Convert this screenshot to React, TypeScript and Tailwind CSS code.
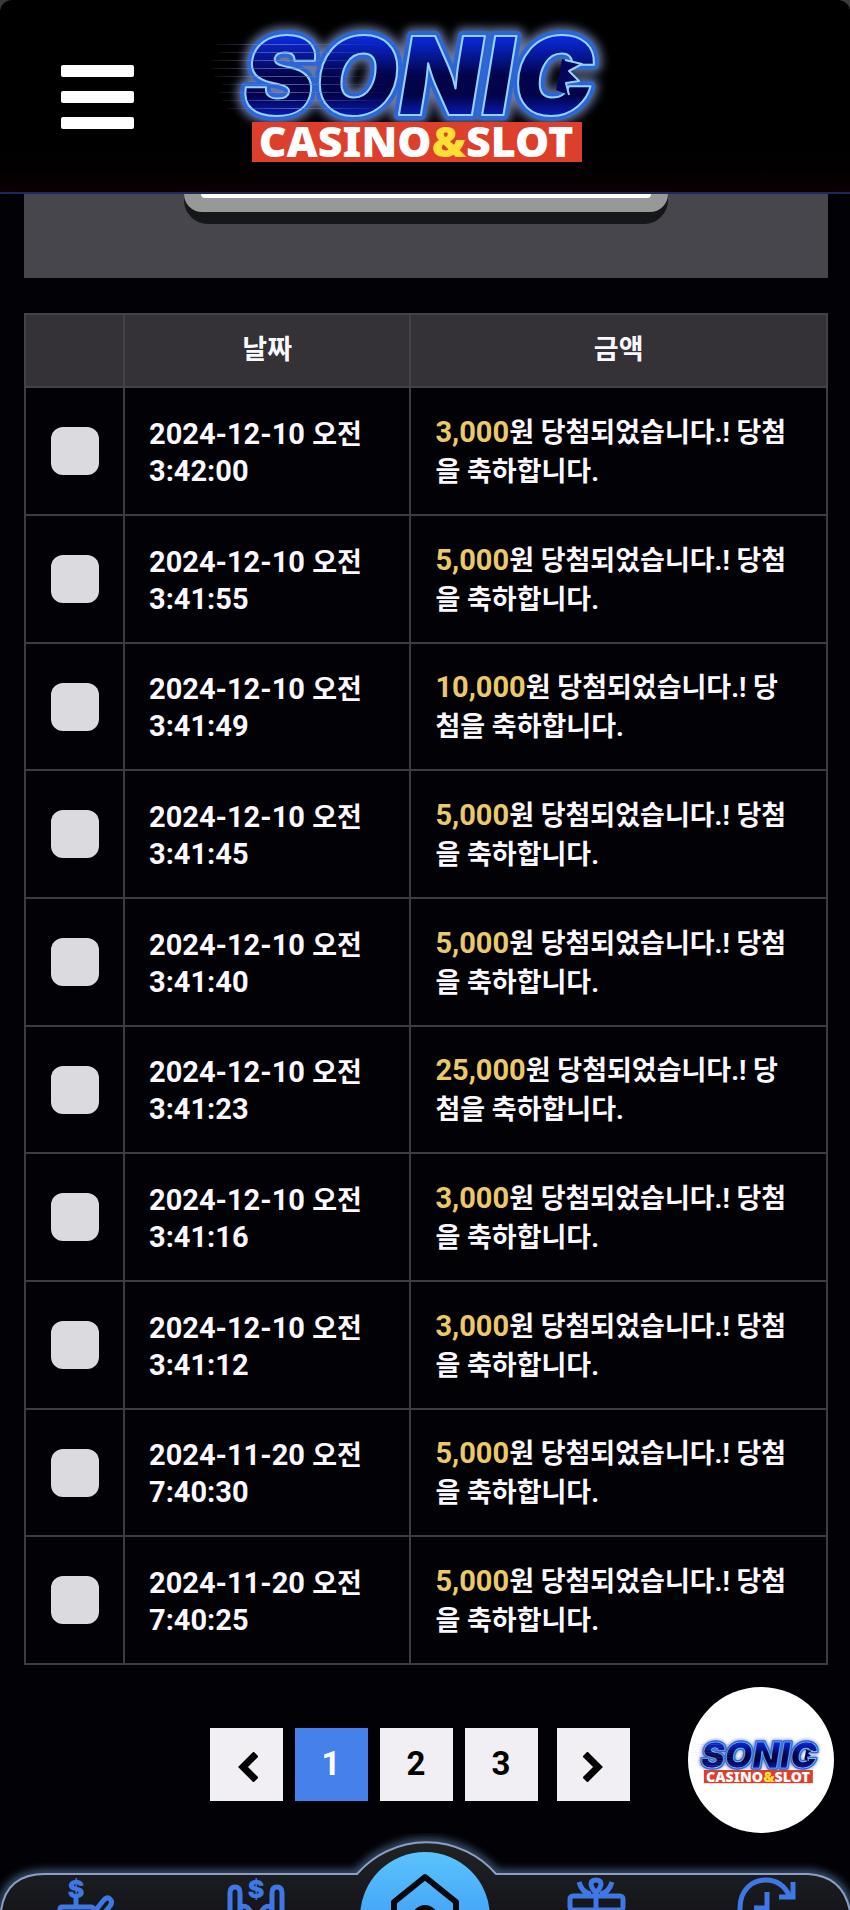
import { useState } from "react";
import { clsx } from "clsx";

interface Win {
    id: number;
    date: string;
    time: string;
    amount: string;
}

const wins: Win[] = [
    { id: 1, date: "2024-12-10", time: "3:42:00", amount: "3,000" },
    { id: 2, date: "2024-12-10", time: "3:41:55", amount: "5,000" },
    { id: 3, date: "2024-12-10", time: "3:41:49", amount: "10,000" },
    { id: 4, date: "2024-12-10", time: "3:41:45", amount: "5,000" },
    { id: 5, date: "2024-12-10", time: "3:41:40", amount: "5,000" },
    { id: 6, date: "2024-12-10", time: "3:41:23", amount: "25,000" },
    { id: 7, date: "2024-12-10", time: "3:41:16", amount: "3,000" },
    { id: 8, date: "2024-12-10", time: "3:41:12", amount: "3,000" },
    { id: 9, date: "2024-11-20", time: "7:40:30", amount: "5,000" },
    { id: 10, date: "2024-11-20", time: "7:40:25", amount: "5,000" },
];

const speedLines = [
    [216, 44], [218, 52], [212, 60], [211, 68], [214, 76], [222, 84], [219, 92], [222, 100], [226, 108],
];

function Logo({ id, className }: { id: string; className?: string }) {
    const word = "font-['Inter'] text-[108px] font-black italic";
    return (
        <svg viewBox="210 10 430 165" className={clsx("overflow-visible", className)} role="img" aria-label="SONIC CASINO&SLOT">
            <defs>
                <linearGradient id={`${id}-fill`} x1="0" y1="0" x2="0" y2="1">
                    <stop offset="0.2" stopColor="#0a2be0" />
                    <stop offset="0.5" stopColor="#02034a" />
                    <stop offset="0.65" stopColor="#02034a" />
                    <stop offset="0.85" stopColor="#0a22cc" />
                </linearGradient>
                <linearGradient id={`${id}-line`} x1="0" y1="0" x2="1" y2="0">
                    <stop offset="0" stopColor="#7d80c8" stopOpacity="0.1" />
                    <stop offset="0.4" stopColor="#7d80c8" stopOpacity="0.7" />
                    <stop offset="1" stopColor="#4a5ae0" stopOpacity="0" />
                </linearGradient>
                <filter id={`${id}-glow`} x="-20%" y="-30%" width="140%" height="160%">
                    <feGaussianBlur stdDeviation="5" />
                </filter>
            </defs>
            <text x="243" y="115" className={word} fill="#8496c8" stroke="#8496c8" strokeWidth="16" strokeLinejoin="round" opacity="0.8" filter={`url(#${id}-glow)`}>SONIC</text>
            <text x="243" y="115" className={word} fill="#2c66d6" stroke="#2c66d6" strokeWidth="10" strokeLinejoin="round" aria-hidden="true">SONIC</text>
            <text x="243" y="115" className={word} fill={`url(#${id}-fill)`} stroke="#93d4ff" strokeWidth="2" strokeLinejoin="round" aria-hidden="true">SONIC</text>
            {/* C 안쪽의 가시 */}
            <path d="M562 59L582 64L569 71L579 81L566 83L569 95L556 90Z" fill="#03065c" />
            <path d="M565 60L582 64L569 71L579 81L566 83L569 95" fill="none" stroke="#93d4ff" strokeWidth="2" strokeLinejoin="round" />
            {speedLines.map(([x, y]) => (
                <rect key={y} x={x} y={y} width="170" height="1" fill={`url(#${id}-line)`} />
            ))}
            <rect x="252" y="122" width="330" height="40" fill="#dc3f2b" />
            <text x="416" y="157" textAnchor="middle" className="font-['Noto_Sans'] text-[43px] font-black" fill="#ffffff">
                CASINO<tspan fill="#ffdf35">&amp;</tspan>SLOT
            </text>
        </svg>
    );
}

const iconProps = {
    viewBox: "0 0 58 34",
    className: "h-[34px] w-[58px] overflow-visible",
    fill: "none",
    stroke: "#3f78e4",
    strokeWidth: 5,
    "aria-hidden": true,
};

function DepositIcon() {
    return (
        <svg {...iconProps}>
            <text x="20" y="22" textAnchor="middle" className="font-['Inter'] text-[25px] font-black" fill="#3f78e4" stroke="none">$</text>
            <path d="M20 22V30M4 38V33Q4 31 6 31H35Q38 31 39 36" />
            <path d="M39 35L47 25Q51 20 54 23Q57 26 54 30L49 36" />
        </svg>
    );
}

function WithdrawIcon() {
    return (
        <svg {...iconProps}>
            <text x="30" y="22" textAnchor="middle" className="font-['Inter'] text-[25px] font-black" fill="#3f78e4" stroke="none">$</text>
            <path d="M4 38V17Q4 11 9 11Q14 11 14 17V38M46 38V17Q46 11 51 11Q56 11 56 17V38" />
            <path d="M14 32Q20 27 25 36M46 32Q40 27 35 36" />
        </svg>
    );
}

function GiftIcon() {
    return (
        <svg {...iconProps}>
            <path d="M13 6Q16 17 25 18M46 6Q43 17 34 18" />
            <path d="M30 17Q25 11 25 8Q25 4 30 4Q35 4 35 8Q35 11 30 17V36" />
            <rect x="4" y="20" width="53" height="14" rx="3" />
        </svg>
    );
}

function HistoryIcon() {
    return (
        <svg {...iconProps}>
            <path d="M4 38V32C4 14 16 4 30 4C41 4 49 10 54 21" />
            <path d="M57 6V21H43M31 16V32H18" />
        </svg>
    );
}

const menu = [
    { label: "입금", Icon: DepositIcon },
    { label: "출금", Icon: WithdrawIcon },
    null,
    { label: "이벤트", Icon: GiftIcon },
    { label: "내역", Icon: HistoryIcon },
];

function BottomNav() {
    return (
        <nav className="relative mt-8 h-[77px] overflow-hidden">
            {/* 가운데가 솟은 바 배경 */}
            <svg viewBox="0 0 850 77" preserveAspectRatio="none" className="absolute inset-0 h-full w-full" aria-hidden="true">
                <defs>
                    <linearGradient id="bar-fill" x1="0" y1="0" x2="0" y2="1">
                        <stop offset="0" stopColor="#202224" />
                        <stop offset="1" stopColor="#141418" />
                    </linearGradient>
                    <filter id="bar-glow" x="-5%" y="-30%" width="110%" height="160%">
                        <feGaussianBlur stdDeviation="4" />
                    </filter>
                </defs>
                <path d="M1 90V78Q6 41 45 41H357A92 92 0 0 1 496 41H808Q843 43 850 78V90" fill="none" stroke="#48698f" strokeWidth="7" filter="url(#bar-glow)" />
                <path d="M1 90V78Q6 41 45 41H357A92 92 0 0 1 496 41H808Q843 43 850 78V90" fill="url(#bar-fill)" stroke="#8d9fc4" strokeWidth="2" />
            </svg>
            <div className="relative grid grid-cols-5 justify-items-center pt-[43px]">
                {menu.map((item) =>
                    item ? (
                        <button key={item.label} type="button" aria-label={item.label}>
                            <item.Icon />
                        </button>
                    ) : (
                        <span key="home" />
                    ),
                )}
            </div>
            <button
                type="button"
                aria-label="홈"
                className="absolute top-[19px] left-1/2 flex size-[130px] -translate-x-1/2 justify-center rounded-full bg-linear-to-b from-[#5ac4fd] to-[#3384ee] pt-5"
            >
                <svg viewBox="0 0 70 70" className="size-[70px]" fill="none" stroke="#05080f" strokeWidth="6" strokeLinejoin="round" aria-hidden="true">
                    <path d="M4 66V30L35 5L66 30V66Z" />
                    <circle cx="35" cy="46" r="10" />
                </svg>
            </button>
        </nav>
    );
}

export default function App() {
    const [checked, setChecked] = useState<number[]>([]);
    const [page, setPage] = useState(1);

    const toggle = (id: number) => {
        setChecked((prev) => (prev.includes(id) ? prev.filter((v) => v !== id) : [...prev, id]));
    };

    return (
        <div className="relative bg-[#020105] font-['Roboto','Noto_Sans_CJK_KR',sans-serif] text-[27px] font-bold text-[#fbf9fe]">
            <div className="bg-[#3a3a3a]">
                <header className="grid grid-cols-[1fr_auto_1fr] items-center rounded-t-xl border-b-2 border-[#20285c] bg-linear-to-b from-black from-60% to-[#0b0003] pt-[10px] pb-[17px]">
                    <button type="button" aria-label="메뉴" className="mt-2 ml-[61px] flex w-[73px] flex-col gap-[14px]">
                        <span className="h-3 rounded-xs bg-white" />
                        <span className="h-3 rounded-xs bg-white" />
                        <span className="h-3 rounded-xs bg-white" />
                    </button>
                    <Logo id="top" className="w-[430px]" />
                </header>
            </div>

            <main className="pr-[22px] pl-6">
                <section className="bg-[#46464c] px-40 pb-[54px]">
                    <button type="button" aria-label="룰렛 돌리기" className="block w-full rounded-b-[24px] bg-[#15171a] pb-3">
                        <span className="block rounded-b-[24px] bg-[#969998] px-[17px] pb-[14px]">
                            <span className="block h-1 rounded-b-lg bg-white" />
                        </span>
                    </button>
                </section>

                <table className="mt-[35px] w-full table-fixed border-collapse border-2 border-[#3d3c40]">
                    <colgroup>
                        <col className="w-[99px]" />
                        <col className="w-5/14" />
                        <col />
                    </colgroup>
                    <thead className="bg-[#343236]">
                        <tr className="h-[73px]">
                            <th className="border-2 border-[#434246]" aria-label="선택" />
                            <th className="border-2 border-[#434246]">날짜</th>
                            <th className="border-2 border-[#434246]">금액</th>
                        </tr>
                    </thead>
                    <tbody>
                        {wins.map((win) => (
                            <tr key={win.id} className="h-32 nth-[3n]:h-[127px]">
                                <td className="border-2 border-[#3d3c40]">
                                    <input
                                        type="checkbox"
                                        aria-label={`${win.date} ${win.time} 선택`}
                                        checked={checked.includes(win.id)}
                                        onChange={() => toggle(win.id)}
                                        className="mx-auto block size-12 appearance-none rounded-xl bg-[#dbdbdf] checked:bg-[#4580eb]"
                                    />
                                </td>
                                <td className="border-2 border-[#3d3c40] px-6 pt-0.5 text-[29px] leading-9">
                                    {win.date} <span className="text-[27px]">오전</span>
                                    <br />
                                    {win.time}
                                </td>
                                <td className="border-2 border-[#3d3c40] px-6 pt-0.5 leading-[39px] break-all">
                                    <span className="text-[29px] text-[#eac968]">{win.amount}</span>원 당첨되었습니다.! 당첨을 축하합니다.
                                </td>
                            </tr>
                        ))}
                    </tbody>
                </table>
            </main>

            <div className="mt-[63px] flex justify-center gap-3 pr-[11px] text-[33px] text-black">
                <button type="button" aria-label="이전" className="flex size-[73px] items-center justify-center bg-[#f1eff3]">
                    <svg viewBox="0 0 20 30" className="mt-1 ml-1 h-[30px] w-5" fill="none" stroke="currentColor" strokeWidth="7" aria-hidden="true">
                        <path d="M18 2L5 15L18 28" />
                    </svg>
                </button>
                {[1, 2, 3].map((n) => (
                    <button
                        key={n}
                        type="button"
                        onClick={() => setPage(n)}
                        className={clsx("size-[73px] pb-0.5", page === n ? "bg-[#4580eb] text-white" : "bg-[#f1eff3]")}
                    >
                        {n}
                    </button>
                ))}
                <button type="button" aria-label="다음" className="ml-[7px] flex size-[73px] items-center justify-center bg-[#f1eff3]">
                    <svg viewBox="0 0 20 30" className="mt-1 h-[30px] w-5" fill="none" stroke="currentColor" strokeWidth="7" aria-hidden="true">
                        <path d="M2 2L15 15L2 28" />
                    </svg>
                </button>
            </div>

            {/* 플로팅 상담 버튼 */}
            <button type="button" aria-label="상담" className="absolute right-4 bottom-[77px] flex size-[146px] items-center justify-center rounded-full bg-white">
                <Logo id="chat" className="w-[142px]" />
            </button>

            <BottomNav />
        </div>
    );
}
